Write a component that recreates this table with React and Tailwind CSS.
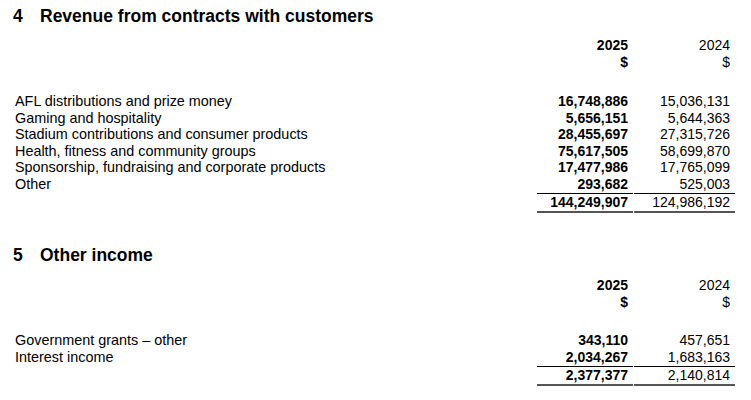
import React from "react";

const revenue = [
  ["AFL distributions and prize money", "16,748,886", "15,036,131"],
  ["Gaming and hospitality", "5,656,151", "5,644,363"],
  ["Stadium contributions and consumer products", "28,455,697", "27,315,726"],
  ["Health, fitness and community groups", "75,617,505", "58,699,870"],
  ["Sponsorship, fundraising and corporate products", "17,477,986", "17,765,099"],
  ["Other", "293,682", "525,003"],
];

const other = [
  ["Government grants – other", "343,110", "457,651"],
  ["Interest income", "2,034,267", "1,683,163"],
];

const Note = ({ num, title, rows, total, gap, leading }) => (
  <div>
    {/* Heading */}
    <div className="flex items-center h-[32px] pl-[13px] text-[17.5px] font-bold">
      <span className="w-[27px]">{num}</span>
      <span>{title}</span>
    </div>

    {/* Column headers */}
    <div className="flex mt-[5px] text-[14px] leading-[17px]">
      <div className="flex-1" />
      <div className="w-[96px] pr-[5px] text-right font-bold">
        <div>2025</div>
        <div>$</div>
      </div>
      <div className="w-[102px] pr-[5px] text-right">
        <div>2024</div>
        <div>$</div>
      </div>
      <div className="w-[16px]" />
    </div>

    {/* Rows */}
    <div className={gap}>
      {rows.map(([label, a, b]) => (
        <div key={label} className={`flex text-[14px] ${leading}`}>
          <div className="flex-1 pl-[15px] text-[14.4px]">{label}</div>
          <div className="w-[96px] pr-[5px] text-right font-bold">{a}</div>
          <div className="w-[102px] pr-[5px] text-right">{b}</div>
          <div className="w-[16px]" />
        </div>
      ))}
      <div className="flex text-[14px] leading-[17px]">
        <div className="flex-1" />
        <div className="w-[96px] mr-[1px] pr-[5px] text-right font-bold border-t border-b-2 border-t-black border-b-[#555]">
          {total[0]}
        </div>
        <div className="w-[101px] pr-[5px] text-right border-t border-b-2 border-t-black border-b-[#555]">
          {total[1]}
        </div>
        <div className="w-[16px]" />
      </div>
    </div>
  </div>
);

const App = () => {
  return (
    <div
      className="w-[751px] h-[400px] bg-white text-black overflow-hidden"
      style={{ fontFamily: '"Liberation Sans", Arial, sans-serif' }}
    >
      <Note
        num="4"
        title="Revenue from contracts with customers"
        rows={revenue}
        total={["144,249,907", "124,986,192"]}
        gap="mt-[22px]"
        leading="leading-[16.6px]"
      />
      <div className="h-[27px]" />
      <Note
        num="5"
        title="Other income"
        rows={other}
        total={["2,377,377", "2,140,814"]}
        gap="mt-[21px]"
        leading="leading-[17px]"
      />
    </div>
  );
};

export default App;
